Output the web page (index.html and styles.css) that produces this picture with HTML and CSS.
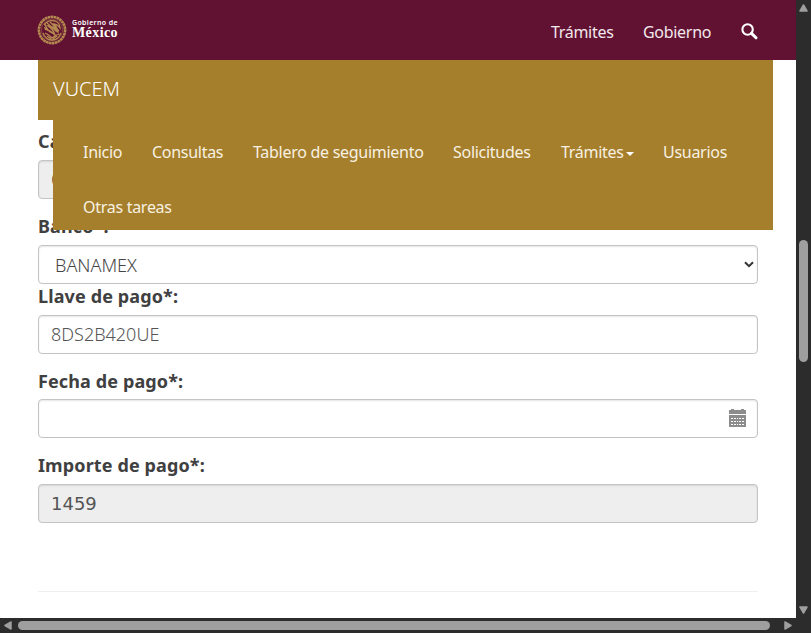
FILE: index.html
```html
<!DOCTYPE html>
<html lang="es">
<head>
<meta charset="utf-8">
<title>VUCEM</title>
<link rel="stylesheet" href="styles.css">
</head>
<body>
<div class="viewport">
  <header class="topbar">
    <a class="brand">
      <svg class="seal" viewBox="0 0 30 30" fill="none" stroke="#b48a50">
        <circle cx="15" cy="15" r="13.1" stroke-width="2.6" stroke-dasharray="2.6 .4"/>
        <circle cx="15" cy="15" r="10.7" stroke-width=".6" opacity=".7"/>
        <path d="M7 10c3-4 7-5 11-4 3 1 5 4 5 7-2-3-4-4-7-4 3 2 5 5 5 8-3-4-6-6-10-6 3 2 6 5 7 9-3-3-6-5-10-6M8 9c1 4 3 7 7 9M10 8l10 9M13 7l9 9" stroke-width="1.3"/>
        <path d="M6 18c2 5 5 7 9 7s7-2 9-7M8 18c3 1 5 3 7 5 2-2 4-3 7-4M10 21l4 3m6-3-4 3" stroke-width="1.3"/>
        <path d="M7 12l4 1-3 2z" fill="#b48a50" stroke="none"/>
      </svg>
      <span class="brand-text"><span class="brand-small">Gobierno de</span><span class="brand-big">México</span></span>
    </a>
    <nav class="topnav">
      <a class="t-tramites">Trámites</a>
      <a class="t-gobierno">Gobierno</a>
      <svg class="search" viewBox="0 0 17 17" fill="none" stroke="#fff"><circle cx="6.6" cy="6.5" r="5.2" stroke-width="2.1"/><path d="M10.5 10.4l4.5 4.4" stroke-width="3" stroke-linecap="round"/></svg>
    </nav>
  </header>
  <div class="subnav">
    <div class="subnav-brand"><span>VUCEM</span></div>
    <nav class="menu">
      <a class="m-inicio">Inicio</a><a class="m-consultas">Consultas</a><a class="m-tablero">Tablero de seguimiento</a><a class="m-solicitudes">Solicitudes</a><a class="m-tramites">Trámites<i class="caret"></i></a><a class="m-usuarios">Usuarios</a><a class="m-otras">Otras tareas</a>
    </nav>
  </div>
  <main class="form">
    <div class="group"><label>Ca</label><div class="control disabled mono">0</div></div>
    <div class="group tight"><label>Banco*:</label><div class="control select"><span class="v-banco">BANAMEX</span><svg class="chevron" viewBox="0 0 10 7" fill="none" stroke="#333" stroke-width="2"><path d="M1 1.2l4 4 4-4"/></svg></div></div>
    <div class="group"><label>Llave de pago*:</label><div class="control"><span class="v-llave">8DS2B420UE</span></div></div>
    <div class="group short"><label>Fecha de pago*:</label><div class="control date">
      <svg class="calendar" viewBox="0 0 17 18" shape-rendering="crispEdges"><path fill="#8c8c8c" d="M0 2q0-1 1-1h1V0h3v1h7V0h3v1h1q1 0 1 1v3H0zM0 6h17v12H0z"/><g fill="#fff"><path id="r" d="M2 9h2v1H2zm3 0h2v1H5zm3 0h1v1H8zm2 0h2v1h-2zm3 0h2v1h-2z"/><use href="#r" y="3"/><use href="#r" y="6"/></g></svg>
    </div></div>
    <div class="group"><label>Importe de pago*:</label><div class="control disabled mono">1459</div></div>
    <hr>
  </main>
</div>
<div class="vbar"><svg viewBox="0 0 9 8"><path d="M4.5 1l3.5 6H1z"/></svg><i></i><svg viewBox="0 0 9 8"><path d="M1 1h7L4.500 7z"/></svg></div>
<div class="hbar"><svg viewBox="0 0 8 9"><path d="M7 1v7L1 4.500z"/></svg><i></i><svg viewBox="0 0 8 9"><path d="M1 1v7l6-3.500z"/></svg></div>
</body>
</html>
```
FILE: styles.css
```css
* { box-sizing: border-box; }
body {
  margin: 0;
  width: 811px;
  height: 633px;
  overflow: hidden;
  display: grid;
  grid-template: 618px 15px / 796px 15px;
  background: #2c2c2c;
  font-family: "Noto Sans", sans-serif;
  font-size: 18px;
  color: #404041;
}
.viewport { position: relative; background: #fff; overflow: hidden; }

.topbar {
  height: 60px;
  padding: 0 38px;
  display: flex;
  justify-content: space-between;
  background: #611232;
  color: #f3e8ed;
}
.brand { display: flex; align-items: center; gap: 4px; }
.seal { width: 30px; height: 30px; margin-left: -1px; margin-right: 1px; }
.brand-text { display: flex; flex-direction: column; color: #fff; margin-top: -3px; }
.brand-small { font: 600 7px/8px "Noto Sans", sans-serif; letter-spacing: .35px; white-space: nowrap; }
.brand-big { font: bold 14px/12px "Liberation Serif", serif; letter-spacing: .4px; }
.topnav { display: flex; align-items: center; gap: 30px; font-size: 16px; padding-top: 3px; white-space: nowrap; }
.topnav a { display: block; letter-spacing: -.3px; position: relative; left: 1px; }
.t-tramites { width: 62px; }
.t-gobierno { width: 69px; }
.search { width: 17px; height: 17px; margin-top: -1px; }

.subnav { position: absolute; top: 60px; left: 38px; width: 735px; color: #f8f1e2; }
.subnav-brand { height: 60px; padding: 0 15px; line-height: 58px; font-size: 20px; font-weight: 300; color: #fff; background: #a57f2c; }
.menu {
  margin-left: 15px;
  height: 110px;
  padding: 5px 15px 0;
  display: flex;
  flex-wrap: wrap;
  align-content: flex-start;
  background: #a57f2c;
  font-size: 16px;
  white-space: nowrap;
}
.menu a { padding-left: 15px; line-height: 54px; height: 55px; letter-spacing: -.28px; }
.m-inicio { width: 69px; }
.m-consultas { width: 101px; }
.m-tablero { width: 200px; }
.m-solicitudes { width: 108px; }
.m-tramites { width: 102px; }
.m-usuarios { width: 95px; }
.m-otras { width: 120px; }
.caret { display: inline-block; margin-left: 2px; vertical-align: middle; border: 4px solid transparent; border-top-color: #fff; border-bottom: 0; }

.form { padding: 69px 38px 0; }
.group { margin-bottom: 15px; }
.group.tight { margin-bottom: 0; }
label { display: block; height: 31px; line-height: 25px; font-weight: 700; letter-spacing: .12px; }
.group.short label { height: 30px; }
.control {
  height: 39px;
  width: 720px;
  padding: 0 12px;
  display: flex;
  align-items: center;
  border: 1px solid #c4c4c4;
  border-radius: 4px;
  box-shadow: inset 0 1px 2px rgba(0, 0, 0, .1);
  font-weight: 300;
  color: #555;
}
.v-llave { padding-bottom: 2px; }
.disabled { background: #eee; }
.mono { font: 18px "DejaVu Sans", sans-serif; }
.select { padding: 0 3px 0 16px; justify-content: space-between; color: #444; }
.chevron { width: 10px; height: 7px; }
.date { justify-content: flex-end; padding-right: 11px; }
.calendar { width: 17px; height: 18px; margin-bottom: 1px; }
hr { margin: 68px 0 0; width: 720px; border: 0; border-top: 1px solid #eee; }

.vbar { display: flex; flex-direction: column; align-items: center; padding-top: 4px; }
.vbar svg { width: 9px; height: 8px; }
.vbar i { width: 9px; height: 122px; margin: 228px 0 244px; border-radius: 5px; background: #9f9f9f; }
.hbar { display: flex; align-items: center; padding-left: 4px; }
.hbar svg { width: 8px; height: 9px; }
.hbar i { width: 752px; height: 9px; margin: 0 14px 0 6px; border-radius: 5px; background: #9f9f9f; }
.vbar path, .hbar path { fill: #9f9f9f; stroke: #9f9f9f; stroke-width: 1.5; stroke-linejoin: round; }
```
